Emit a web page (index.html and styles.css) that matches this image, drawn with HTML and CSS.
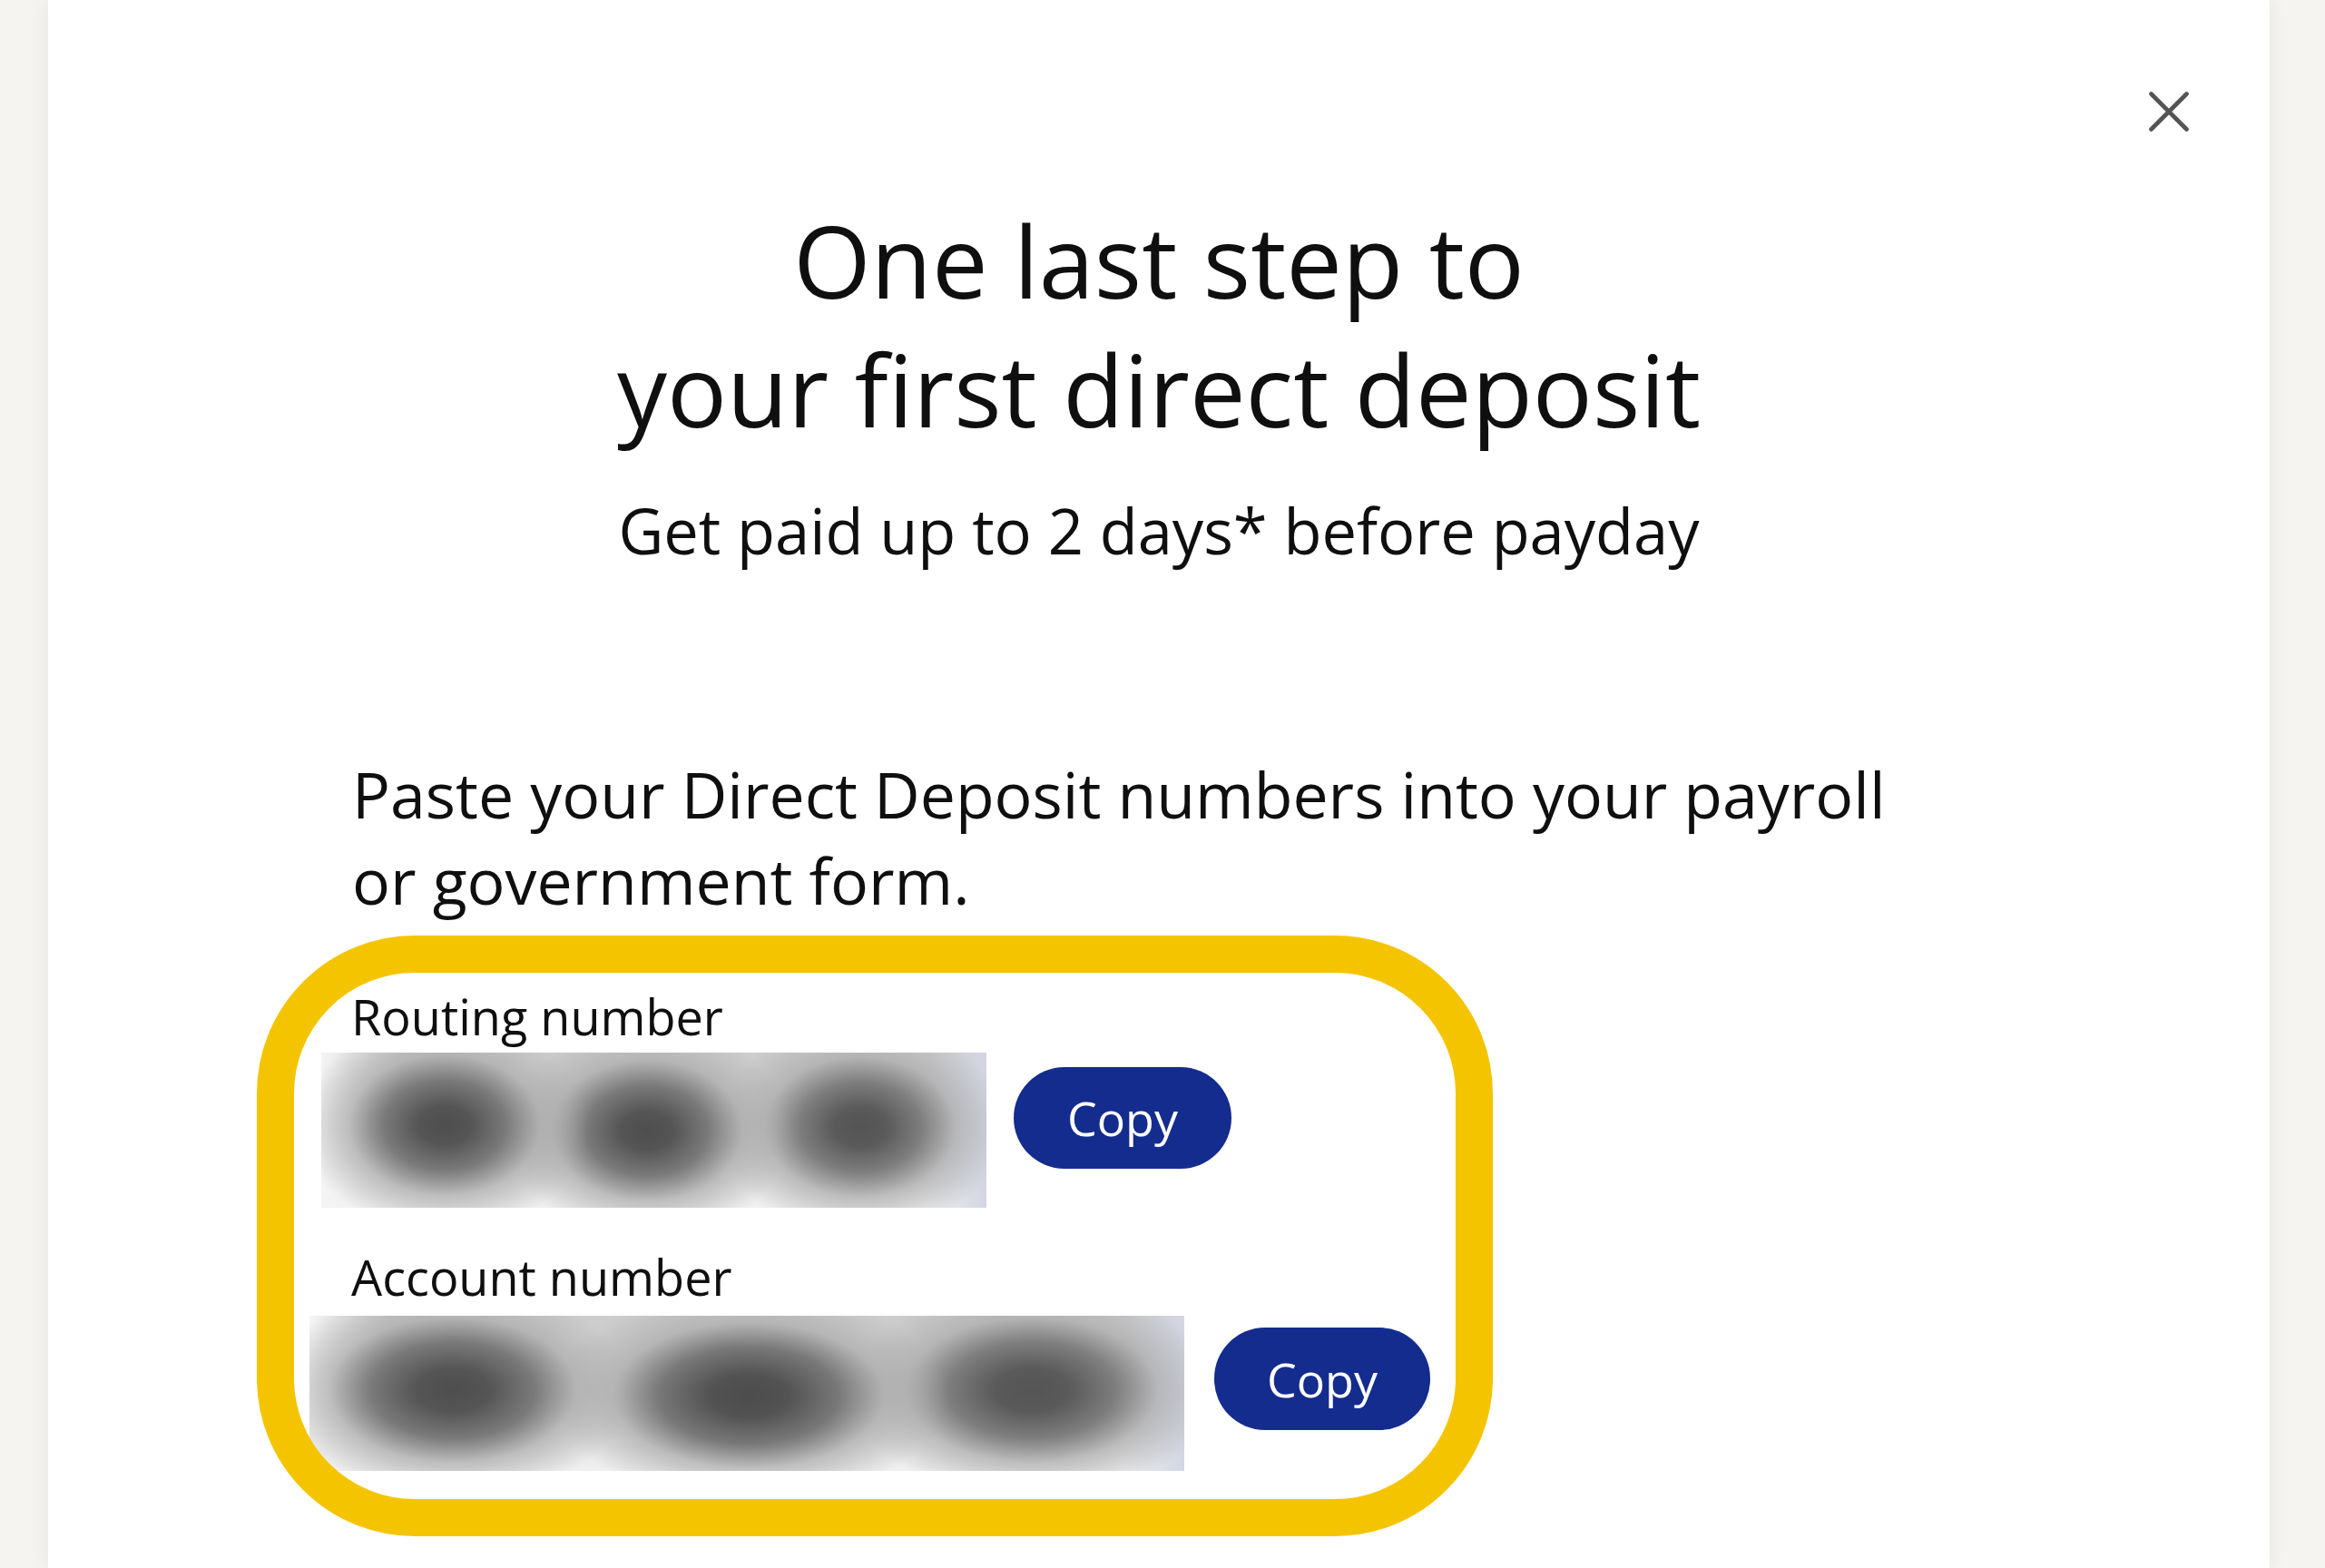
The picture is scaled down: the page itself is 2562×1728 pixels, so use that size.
FILE: index.html
```html
<!DOCTYPE html>
<html lang="en">
<head>
<meta charset="utf-8">
<title>One last step to your first direct deposit</title>
<link rel="stylesheet" href="styles.css">
</head>
<body>
<div class="modal">
  <div class="topbar">
    <button class="close" aria-label="Close">
      <svg viewBox="0 0 44 44" width="44" height="44"><path d="M2.5 2.5 L41.5 41.5 M41.5 2.5 L2.5 41.5" stroke="#545454" stroke-width="4.6" stroke-linecap="round" fill="none"/></svg>
    </button>
  </div>
  <h1 class="title">One last step to<br>your first direct deposit</h1>
  <p class="subtitle">Get paid up to 2 days* before payday</p>
  <div class="content">
    <p class="lead">Paste your Direct Deposit numbers into your payroll or government form.</p>
    <div class="highlight">
      <div class="label label-routing">Routing number</div>
      <div class="row row-routing">
        <div class="masked masked-routing"></div>
        <button class="copy copy-routing">Copy</button>
      </div>
      <div class="label label-account">Account number</div>
      <div class="row row-account">
        <div class="masked masked-account"></div>
        <button class="copy copy-account">Copy</button>
      </div>
    </div>
  </div>
</div>
</body>
</html>
```

FILE: styles.css
```css
html, body {
  margin: 0;
  padding: 0;
}
body {
  background: #f5f4f0;
  font-family: "Open Sans", "Noto Sans", sans-serif;
  color: #0f0f0f;
  overflow: hidden;
}
.modal {
  width: 2448px;
  margin-left: 53px;
  min-height: 1728px;
  background: #ffffff;
  box-shadow: 0 0 22px rgba(0, 0, 0, 0.07);
}
.topbar {
  display: flex;
  justify-content: flex-end;
  padding: 101px 89px 0 0;
}
.close {
  width: 44px;
  height: 44px;
  padding: 0;
  margin: 0;
  border: 0;
  background: transparent;
  display: block;
}
.close svg {
  display: block;
}
.title {
  margin: 71px 0 0 0;
  text-align: center;
  font-weight: 400;
  font-size: 109.8px;
  line-height: 142px;
  color: #0f0f0f;
}
.subtitle {
  margin: 39px 0 0 0;
  text-align: center;
  font-size: 68.6px;
  line-height: 92px;
}
.content {
  padding-left: 335px;
  margin-top: 196px;
}
.lead {
  margin: 0;
  width: 1730px;
  font-size: 69.8px;
  line-height: 95px;
}
.highlight {
  position: relative;
  box-sizing: border-box;
  width: 1362px;
  margin: 14px 0 0 -105px;
  padding: 57px 41px 72px 41px;
}
.highlight::after {
  content: "";
  position: absolute;
  inset: 0;
  border: 41px solid #f5c400;
  border-radius: 174px;
  pointer-events: none;
}
.label {
  margin-left: 63px;
  font-size: 54px;
  line-height: 64px;
}
.label-account {
  margin-top: 44px;
}
.row {
  display: flex;
  align-items: flex-start;
}
.row-routing {
  margin: 8px 0 0 30px;
  gap: 30px;
}
.row-account {
  margin: 11px 0 0 17px;
  gap: 33px;
}
.masked {
  height: 171px;
  flex: none;
}
.masked-routing {
  width: 733px;
  background:
    radial-gradient(ellipse 160px 118px at 136px 80px, #4e4e4e 0%, #555555 18%, #7a7a7a 42%, rgba(170,170,170,0.7) 66%, rgba(200,200,200,0) 100%),
    radial-gradient(ellipse 160px 118px at 359px 86px, #4e4e4e 0%, #555555 18%, #7a7a7a 42%, rgba(170,170,170,0.7) 66%, rgba(200,200,200,0) 100%),
    radial-gradient(ellipse 160px 118px at 594px 82px, #545454 0%, #5a5a5a 18%, #7e7e7e 42%, rgba(170,170,170,0.7) 66%, rgba(200,200,200,0) 100%),
    linear-gradient(to left, #d3d6e2 0%, rgba(211,214,226,0) 9%),
    linear-gradient(to right, #f4f4f4 0%, rgba(244,244,244,0) 12%),
    linear-gradient(to bottom, #cdcdcd 0%, #d8d8d8 50%, #f0f0f0 100%);
}
.masked-account {
  width: 964px;
  background:
    radial-gradient(ellipse 200px 118px at 158px 82px, #4e4e4e 0%, #555555 20%, #7a7a7a 45%, rgba(170,170,170,0.7) 68%, rgba(200,200,200,0) 100%),
    radial-gradient(ellipse 220px 118px at 484px 88px, #4c4c4c 0%, #535353 20%, #787878 45%, rgba(170,170,170,0.7) 68%, rgba(200,200,200,0) 100%),
    radial-gradient(ellipse 205px 118px at 796px 82px, #555555 0%, #5a5a5a 20%, #7e7e7e 45%, rgba(170,170,170,0.7) 68%, rgba(200,200,200,0) 100%),
    linear-gradient(to left, #d3d6e2 0%, rgba(211,214,226,0) 7%),
    linear-gradient(to right, #f4f4f4 0%, rgba(244,244,244,0) 9%),
    linear-gradient(to bottom, #cdcdcd 0%, #d8d8d8 50%, #f0f0f0 100%);
}
.copy {
  flex: none;
  width: 240px;
  height: 112px;
  border: 0;
  border-radius: 56px;
  background: #142c8e;
  color: #ffffff;
  font-family: "Open Sans", "Noto Sans", sans-serif;
  font-size: 52px;
  font-weight: 500;
  padding: 0;
  margin: 0;
  line-height: 112px;
}
.copy-routing {
  margin-top: 16px;
}
.copy-account {
  margin-top: 13px;
  width: 238px;
  height: 113px;
}
```
